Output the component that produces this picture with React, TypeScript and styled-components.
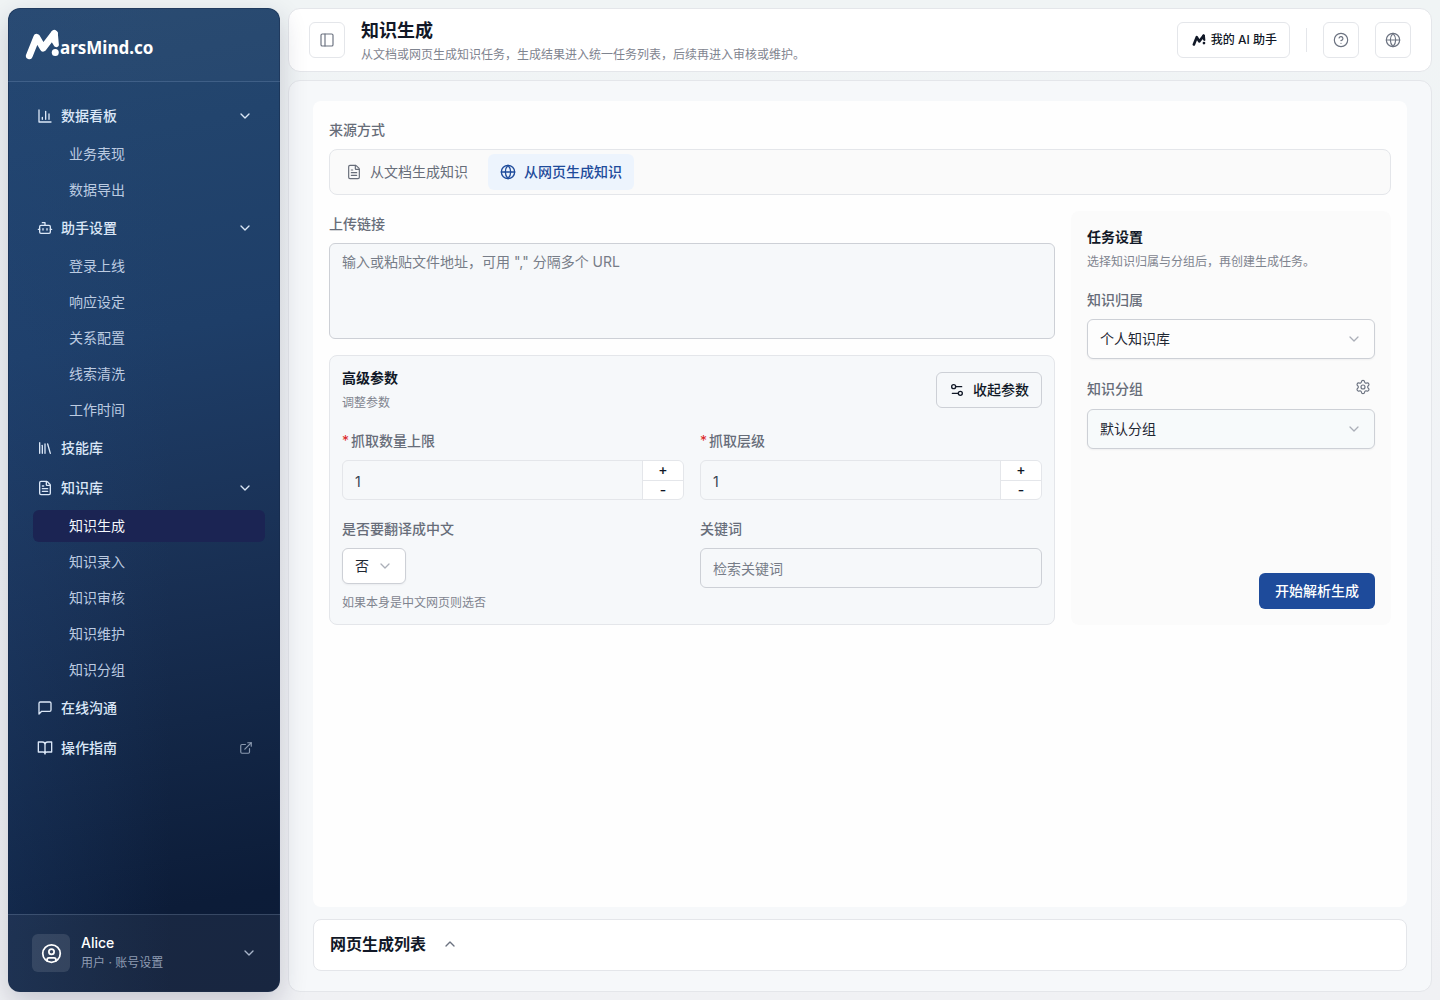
import React, { useState } from "react";
import styled, { createGlobalStyle, css } from "styled-components";
import {
  Bot,
  ChevronDown,
  ChevronUp,
  CircleHelp,
  CircleUser,
  ExternalLink,
  FileText,
  Globe,
  Library,
  PanelLeft,
  Settings,
  Settings2,
} from "lucide-react";

const color = {
  ink: "#111827",
  label: "#676d79",
  muted: "#7f848f",
  line: "#e4e6ea",
  control: "#cdd0d6",
  soft: "#f6f8fa",
  brand: "#1e4b9b",
};

const GlobalStyle = createGlobalStyle`
  *, *::before, *::after { box-sizing: border-box; }
  body {
    margin: 0;
    background: linear-gradient(180deg, #f0f4f5 0%, #f1f3f6 50%, #f0f1f4 100%);
    color: ${color.ink};
    font-family: Inter, "Noto Sans CJK SC", sans-serif;
    font-size: 14px;
    line-height: 20px;
  }
  button, input, select, textarea { font: inherit; color: inherit; margin: 0; }
  button { cursor: pointer; }
  h1, h2, p { margin: 0; }
  svg { flex: none; display: block; }
`;

const Shell = styled.div`
  display: flex;
  gap: 8px;
  min-height: 100vh;
  padding: 8px;
`;

/* ---------- sidebar ---------- */

const Sidebar = styled.aside`
  position: relative;
  z-index: 1;
  flex: 0 0 272px;
  display: flex;
  flex-direction: column;
  overflow: hidden;
  border-radius: 12px;
  color: #dbe7f7;
  background:
    linear-gradient(90deg, rgba(34, 70, 120, 0.28) 0%, rgba(34, 70, 120, 0) 60%),
    linear-gradient(170deg, #26486f 0%, #22446d 14%, #1e3e68 34%, #1a3257 54%, #132747 72%, #0c1c38 90%, #0c1b36 100%);
  box-shadow: 0 10px 28px rgba(24, 32, 64, 0.2), inset 0 0 0 1px rgba(20, 40, 72, 0.5);
`;

const Brand = styled.a`
  display: flex;
  align-items: center;
  height: 74px;
  padding-left: 17px;
  border-bottom: 1px solid rgba(148, 178, 220, 0.22);
  background: rgba(255, 255, 255, 0.02);
  color: #fff;
  text-decoration: none;
`;

const BrandText = styled.span`
  margin-top: 6px;
  font-family: "Noto Sans", "Open Sans", sans-serif;
  font-size: 17px;
  font-weight: 700;
  line-height: 24px;
`;

const Nav = styled.nav`
  flex: 1;
  display: flex;
  flex-direction: column;
  gap: 4px;
  padding: 16px 15px 16px 21px;
`;

const navRow = css`
  display: flex;
  align-items: center;
  border: 0;
  border-radius: 6px;
  background: none;
  color: inherit;
  text-align: left;
  text-decoration: none;
`;

const GroupButton = styled.button`
  ${navRow}
  gap: 8px;
  height: 36px;
  margin-right: 4px;
  padding: 0 8px;
  font-weight: 500;
`;

const GroupLink = styled.a`
  ${navRow}
  gap: 8px;
  height: 36px;
  margin-right: 4px;
  padding: 0 8px;
  font-weight: 500;
`;

const GroupName = styled.span`
  flex: 1;
`;

const SubLink = styled.a<{ $active?: boolean }>`
  ${navRow}
  height: 32px;
  margin-left: 4px;
  padding-left: 36px;
  color: ${(p) => (p.$active ? "#f4f7fc" : "#bccbe1")};
  background: ${(p) => (p.$active ? "#1b2453" : "transparent")};
`;

const Account = styled.button`
  display: flex;
  align-items: center;
  gap: 11px;
  height: 78px;
  padding: 0 23px 1px 24px;
  border: 0;
  border-top: 1px solid rgba(148, 170, 205, 0.25);
  background: rgba(255, 255, 255, 0.05);
  text-align: left;
`;

const Avatar = styled.span`
  display: grid;
  place-items: center;
  width: 38px;
  height: 38px;
  border-radius: 6px;
  background: rgba(255, 255, 255, 0.11);
  color: #fff;
`;

const AccountText = styled.span`
  flex: 1;
  display: flex;
  flex-direction: column;
  gap: 2px;
  font-size: 12px;
  line-height: 18px;
  color: #8e9bb2;

  strong {
    font-size: 14px;
    font-weight: 500;
    color: #fff;
  }
`;

/* ---------- page frame ---------- */

const Content = styled.div`
  flex: 1;
  min-width: 0;
  display: flex;
  flex-direction: column;
  gap: 8px;
`;

const Header = styled.header`
  display: flex;
  align-items: center;
  gap: 16px;
  height: 64px;
  padding: 0 20px;
  border: 1px solid ${color.line};
  border-radius: 12px;
  background: #fff;
`;

const Heading = styled.div`
  flex: 1;
`;

const Title = styled.h1`
  font-size: 18px;
  font-weight: 600;
  line-height: 30px;
`;

const Caption = styled.p`
  font-size: 12px;
  line-height: 18px;
  color: ${color.muted};
`;

const IconButton = styled.button`
  display: grid;
  place-items: center;
  width: 36px;
  height: 36px;
  padding: 0;
  border: 1px solid ${color.line};
  border-radius: 6px;
  background: #fff;
  color: #6b7280;
`;

const AssistantButton = styled.button`
  display: flex;
  align-items: center;
  gap: 5px;
  height: 36px;
  padding: 0 12px 0 14px;
  border: 1px solid ${color.line};
  border-radius: 6px;
  background: #fff;
  font-size: 12px;
  font-weight: 500;
`;

const Divider = styled.span`
  width: 1px;
  height: 24px;
  background: ${color.line};
`;

const Main = styled.main`
  flex: 1;
  display: flex;
  flex-direction: column;
  gap: 12px;
  padding: 20px 24px;
  border: 1px solid ${color.line};
  border-radius: 12px;
  background: ${color.soft};
`;

const Card = styled.section`
  flex: 1;
  display: flex;
  flex-direction: column;
  gap: 16px;
  padding: 16px;
  border-radius: 8px;
  background: #fefefe;
`;

/* ---------- form parts ---------- */

const Field = styled.div`
  display: flex;
  flex-direction: column;
  align-items: stretch;
`;

const labelText = css`
  margin-bottom: 6px;
  line-height: 26px;
  font-weight: 500;
  color: ${color.label};
`;

const Label = styled.label`
  ${labelText}
`;

const GroupLabel = styled.div`
  ${labelText}
`;

const Required = styled.span`
  margin-right: 2px;
  font-weight: 400;
  color: #dc2626;
`;

const Tabs = styled.div`
  display: flex;
  gap: 8px;
  padding: 4px;
  border: 1px solid ${color.line};
  border-radius: 8px;
  background: #fafafa;
`;

const Tab = styled.button<{ $active?: boolean }>`
  display: flex;
  align-items: center;
  gap: 8px;
  height: 36px;
  padding: 0 12px;
  border: 0;
  border-radius: 6px;
  background: ${(p) => (p.$active ? "#edf4fd" : "transparent")};
  color: ${(p) => (p.$active ? color.brand : color.label)};
  font-weight: ${(p) => (p.$active ? 500 : 400)};
`;

const Columns = styled.div`
  display: grid;
  grid-template-columns: minmax(0, 1fr) 320px;
  gap: 16px;
`;

const Stack = styled.div`
  display: flex;
  flex-direction: column;
  gap: 16px;
`;

const fieldBox = css`
  width: 100%;
  border: 1px solid ${color.control};
  border-radius: 6px;
  background: ${color.soft};
  outline-color: ${color.brand};

  &::placeholder {
    color: #777d88;
    opacity: 1;
  }
`;

const LinkArea = styled.textarea`
  ${fieldBox}
  display: block;
  height: 96px;
  padding: 8px 12px;
  resize: none;
`;

const TextInput = styled.input`
  ${fieldBox}
  height: 40px;
  padding: 0 12px;
`;

const Panel = styled.section`
  display: flex;
  flex-direction: column;
  gap: 16px;
  padding: 12px;
  border: 1px solid ${color.line};
  border-radius: 8px;
  background: ${color.soft};
`;

const PanelHead = styled.div`
  display: flex;
  align-items: center;
  justify-content: space-between;
`;

const PanelTitle = styled.h2`
  margin-bottom: 6px;
  font-size: 14px;
  font-weight: 600;
  line-height: 20px;
`;

const CollapseButton = styled.button`
  display: flex;
  align-items: center;
  gap: 8px;
  height: 36px;
  padding: 0 12px;
  border: 1px solid ${color.control};
  border-radius: 6px;
  background: ${color.soft};
  font-weight: 500;
`;

const FieldGrid = styled.div`
  display: grid;
  grid-template-columns: 1fr 1fr;
  gap: 16px;
`;

const NumberBox = styled.div`
  display: grid;
  grid-template-columns: 1fr 41px;
  height: 40px;
  overflow: hidden;
  border: 1px solid ${color.line};
  border-radius: 6px;
`;

const NumberInput = styled.input`
  min-width: 0;
  padding: 4px 12px 0;
  border: 0;
  background: transparent;
  color: #374151;
`;

const Steps = styled.div`
  display: grid;
  grid-template-rows: 1fr 1fr;
  gap: 1px;
  border-left: 1px solid ${color.line};
  background: ${color.line};
`;

const Step = styled.button`
  padding: 0;
  border: 0;
  background: #fff;
  line-height: 16px;
  font-weight: 500;
`;

const SelectBox = styled.div<{ $compact?: boolean; $tinted?: boolean }>`
  position: relative;
  width: ${(p) => (p.$compact ? "64px" : "100%")};

  select {
    appearance: none;
    display: block;
    width: 100%;
    height: ${(p) => (p.$compact ? "36px" : "40px")};
    padding: 0 12px;
    border: 1px solid ${color.control};
    border-radius: 6px;
    background: ${(p) => (p.$tinted ? "#f7fafb" : p.$compact ? "#fff" : "#fdfdfd")};
    box-shadow: 0 1px 2px rgba(16, 24, 40, 0.05);
    color: #1f2733;
  }

  svg {
    position: absolute;
    top: 50%;
    right: 15px;
    margin-top: -6px;
    color: #abafb8;
    pointer-events: none;
  }
`;

const Hint = styled.p`
  margin-top: 10px;
  font-size: 12px;
  line-height: 18px;
  color: ${color.muted};
`;

const TaskPanel = styled.aside`
  display: flex;
  flex-direction: column;
  gap: 16px;
  padding: 16px;
  border-radius: 8px;
  background: #fbfbfb;
`;

const LabelRow = styled.div`
  display: flex;
  align-items: flex-start;
  justify-content: space-between;
  height: 28px;
  margin-bottom: 6px;

  label {
    margin: 0;
    line-height: 28px;
  }
`;

const GhostButton = styled.button`
  display: grid;
  place-items: center;
  width: 24px;
  height: 24px;
  padding: 0;
  border: 0;
  background: none;
  color: #6b7280;
`;

const PrimaryButton = styled.button`
  align-self: flex-end;
  height: 36px;
  margin-top: auto;
  padding: 0 16px;
  border: 0;
  border-radius: 6px;
  background: ${color.brand};
  color: #fff;
  font-weight: 500;
`;

const ListToggle = styled.button`
  display: flex;
  align-items: center;
  gap: 16px;
  height: 52px;
  padding: 0 16px 2px;
  border: 1px solid ${color.line};
  border-radius: 8px;
  background: #fff;
  font-size: 16px;
  font-weight: 600;
  line-height: 24px;

  svg {
    color: #6b7280;
  }
`;

/* ---------- drawings ---------- */

const lineIcon = {
  width: 16,
  height: 16,
  viewBox: "0 0 24 24",
  fill: "none",
  stroke: "currentColor",
  strokeWidth: 2,
  strokeLinecap: "round" as const,
  strokeLinejoin: "round" as const,
  "aria-hidden": true,
};

const ChartIcon = () => (
  <svg {...lineIcon}>
    <path d="M3 3v18h18M18 17V9M13 17V5M8 17v-3" />
  </svg>
);

const ChatIcon = () => (
  <svg {...lineIcon}>
    <path d="M21 15a2 2 0 0 1-2 2H7l-4 4V5a2 2 0 0 1 2-2h14a2 2 0 0 1 2 2z" />
  </svg>
);

const BookIcon = () => (
  <svg {...lineIcon}>
    <path d="M2 3h6a4 4 0 0 1 4 4v14a3 3 0 0 0-3-3H2zM22 3h-6a4 4 0 0 0-4 4v14a3 3 0 0 1 3-3h7z" />
  </svg>
);

const Caret = () => (
  <svg width="12" height="12" viewBox="0 0 12 12" fill="none" stroke="currentColor" aria-hidden="true">
    <path d="M2 4l4 4 4-4" strokeWidth="1.300" strokeLinecap="round" strokeLinejoin="round" />
  </svg>
);

const Mark = ({ width, height }: { width: number; height: number }) => (
  <svg width={width} height={height} viewBox="0 0 34 30" fill="none" aria-hidden="true">
    <path
      d="M4.200 26L11.400 8l6.200 10.500L28.500 4.200"
      stroke="currentColor"
      strokeWidth="6.600"
      strokeLinecap="round"
      strokeLinejoin="round"
    />
    <path d="M25.200 4.500a3.400 3.400 0 0 1 6.700-.4l1 11.200c.2 2.200-3.400 3.200-4.600 1.200L25 11z" fill="currentColor" />
    <circle cx="29.400" cy="22.800" r="3.400" fill="currentColor" />
  </svg>
);

/* ---------- composition ---------- */

type Group = {
  name: string;
  icon: React.ReactNode;
  items?: string[];
  external?: boolean;
};

const groups: Group[] = [
  { name: "数据看板", icon: <ChartIcon />, items: ["业务表现", "数据导出"] },
  {
    name: "助手设置",
    icon: <Bot size={16} />,
    items: ["登录上线", "响应设定", "关系配置", "线索清洗", "工作时间"],
  },
  { name: "技能库", icon: <Library size={16} /> },
  {
    name: "知识库",
    icon: <FileText size={16} />,
    items: ["知识生成", "知识录入", "知识审核", "知识维护", "知识分组"],
  },
  { name: "在线沟通", icon: <ChatIcon /> },
  { name: "操作指南", icon: <BookIcon />, external: true },
];

function NavGroup({ group }: { group: Group }) {
  const [open, setOpen] = useState(true);
  if (!group.items) {
    return (
      <GroupLink href="#">
        {group.icon}
        <GroupName>{group.name}</GroupName>
        {group.external && <ExternalLink size={14} opacity={0.6} />}
      </GroupLink>
    );
  }
  return (
    <>
      <GroupButton type="button" aria-expanded={open} onClick={() => setOpen(!open)}>
        {group.icon}
        <GroupName>{group.name}</GroupName>
        <ChevronDown size={16} />
      </GroupButton>
      {open &&
        group.items.map((item) => (
          <SubLink key={item} href="#" $active={item === "知识生成"}>
            {item}
          </SubLink>
        ))}
    </>
  );
}

function NumberField({ id, label }: { id: string; label: string }) {
  const [value, setValue] = useState(1);
  return (
    <Field>
      <Label htmlFor={id}>
        <Required>*</Required>
        {label}
      </Label>
      <NumberBox>
        <NumberInput
          id={id}
          inputMode="numeric"
          value={value}
          onChange={(e) => setValue(Number(e.target.value) || 0)}
        />
        <Steps>
          <Step type="button" onClick={() => setValue(value + 1)}>
            +
          </Step>
          <Step type="button" onClick={() => setValue(Math.max(0, value - 1))}>
            -
          </Step>
        </Steps>
      </NumberBox>
    </Field>
  );
}

export default function App() {
  const [source, setSource] = useState("web");
  return (
    <>
      <GlobalStyle />
      <Shell>
        <Sidebar>
          <Brand href="#">
            <Mark width={35} height={31} />
            <BrandText>arsMind.co</BrandText>
          </Brand>
          <Nav>
            {groups.map((group) => (
              <NavGroup key={group.name} group={group} />
            ))}
          </Nav>
          <Account type="button">
            <Avatar>
              <CircleUser size={21} />
            </Avatar>
            <AccountText>
              <strong>Alice</strong>
              用户 · 账号设置
            </AccountText>
            <ChevronDown size={16} color="#a9b5c9" />
          </Account>
        </Sidebar>

        <Content>
          <Header>
            <IconButton type="button" aria-label="收起侧栏">
              <PanelLeft size={16} strokeWidth={1.75} />
            </IconButton>
            <Heading>
              <Title>知识生成</Title>
              <Caption>从文档或网页生成知识任务，生成结果进入统一任务列表，后续再进入审核或维护。</Caption>
            </Heading>
            <AssistantButton type="button">
              <Mark width={14} height={12} />
              我的 AI 助手
            </AssistantButton>
            <Divider />
            <IconButton type="button" aria-label="帮助">
              <CircleHelp size={16} strokeWidth={1.75} />
            </IconButton>
            <IconButton type="button" aria-label="语言">
              <Globe size={16} strokeWidth={1.75} />
            </IconButton>
          </Header>

          <Main>
            <Card>
              <Field>
                <GroupLabel id="source-label">来源方式</GroupLabel>
                <Tabs role="tablist" aria-labelledby="source-label">
                  <Tab
                    type="button"
                    role="tab"
                    aria-selected={source === "doc"}
                    $active={source === "doc"}
                    onClick={() => setSource("doc")}
                  >
                    <FileText size={16} strokeWidth={1.75} />
                    从文档生成知识
                  </Tab>
                  <Tab
                    type="button"
                    role="tab"
                    aria-selected={source === "web"}
                    $active={source === "web"}
                    onClick={() => setSource("web")}
                  >
                    <Globe size={16} />
                    从网页生成知识
                  </Tab>
                </Tabs>
              </Field>

              <Columns>
                <Stack>
                  <Field>
                    <Label htmlFor="links">上传链接</Label>
                    <LinkArea id="links" placeholder={'输入或粘贴文件地址，可用 "," 分隔多个 URL'} />
                  </Field>

                  <Panel>
                    <PanelHead>
                      <div>
                        <PanelTitle>高级参数</PanelTitle>
                        <Caption>调整参数</Caption>
                      </div>
                      <CollapseButton type="button">
                        <Settings2 size={16} />
                        收起参数
                      </CollapseButton>
                    </PanelHead>
                    <FieldGrid>
                      <NumberField id="limit" label="抓取数量上限" />
                      <NumberField id="depth" label="抓取层级" />
                      <Field>
                        <Label htmlFor="translate">是否要翻译成中文</Label>
                        <SelectBox $compact>
                          <select id="translate" defaultValue="否">
                            <option>否</option>
                            <option>是</option>
                          </select>
                          <Caret />
                        </SelectBox>
                        <Hint>如果本身是中文网页则选否</Hint>
                      </Field>
                      <Field>
                        <Label htmlFor="keyword">关键词</Label>
                        <TextInput id="keyword" placeholder="检索关键词" />
                      </Field>
                    </FieldGrid>
                  </Panel>
                </Stack>

                <TaskPanel>
                  <div>
                    <PanelTitle>任务设置</PanelTitle>
                    <Caption>选择知识归属与分组后，再创建生成任务。</Caption>
                  </div>
                  <Field>
                    <Label htmlFor="owner">知识归属</Label>
                    <SelectBox>
                      <select id="owner">
                        <option>个人知识库</option>
                      </select>
                      <Caret />
                    </SelectBox>
                  </Field>
                  <Field>
                    <LabelRow>
                      <Label htmlFor="group">知识分组</Label>
                      <GhostButton type="button" aria-label="管理分组">
                        <Settings size={16} strokeWidth={1.75} />
                      </GhostButton>
                    </LabelRow>
                    <SelectBox $tinted>
                      <select id="group">
                        <option>默认分组</option>
                      </select>
                      <Caret />
                    </SelectBox>
                  </Field>
                  <PrimaryButton type="button">开始解析生成</PrimaryButton>
                </TaskPanel>
              </Columns>
            </Card>

            <ListToggle type="button">
              网页生成列表
              <ChevronUp size={16} />
            </ListToggle>
          </Main>
        </Content>
      </Shell>
    </>
  );
}
